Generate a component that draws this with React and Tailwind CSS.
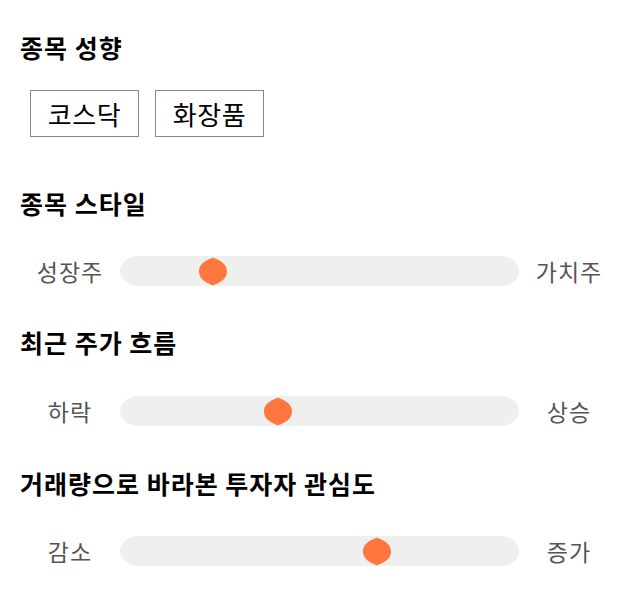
import React from "react";

const font = { fontFamily: '"Noto Sans CJK KR", "Noto Sans", sans-serif' };

function Thumb({ className }) {
  return (
    <svg className={className} width="28" height="29" viewBox="0 0 28 29">
      <path
        d="M14 0.5 C16.5 2 28 5 28 14.5 C28 24 16.5 27 14 28.5 C11.5 27 0 24 0 14.5 C0 5 11.5 2 14 0.5 Z"
        fill="#FF773E"
      />
    </svg>
  );
}

function Slider({ left, right, pos }) {
  return (
    <div className="flex items-center h-[30px]">
      <div className="w-[100px] text-center text-[23px] tracking-[1px] text-[#555555] leading-[30px]">{left}</div>
      <div className="relative w-[399px] h-[30px] bg-[#efefef] rounded-[18px/15px]">
        <Thumb className={`absolute top-[0.5px] ${pos}`} />
      </div>
      <div className="w-[100px] text-center text-[23px] tracking-[1px] text-[#555555] leading-[30px]">{right}</div>
    </div>
  );
}

export default function App() {
  return (
    <div className="w-[640px] h-[606px] bg-white px-5 pt-[32px]" style={font}>
      <h2 className="text-[25px] tracking-[1px] font-bold leading-[30px] text-black">종목 성향</h2>
      <div className="flex gap-4 mt-[28px] ml-[10px]">
        <div className="w-[109px] h-[47px] border border-[#888888] flex items-center justify-center text-[26px] tracking-[0.5px] text-black">코스닥</div>
        <div className="w-[109px] h-[47px] border border-[#888888] flex items-center justify-center text-[26px] tracking-[0.5px] text-black">화장품</div>
      </div>

      <h2 className="mt-[51px] text-[25px] tracking-[1px] font-bold leading-[30px] text-black">종목 스타일</h2>
      <div className="mt-[38px]">
        <Slider left="성장주" right="가치주" pos="left-[79px]" />
      </div>

      <h2 className="mt-[41px] text-[25px] tracking-[1px] font-bold leading-[30px] text-black">최근 주가 흐름</h2>
      <div className="mt-[39px]">
        <Slider left="하락" right="상승" pos="left-[144px]" />
      </div>

      <h2 className="mt-[42px] text-[25px] tracking-[1px] font-bold leading-[30px] text-black">거래량으로 바라본 투자자 관심도</h2>
      <div className="mt-[38px]">
        <Slider left="감소" right="증가" pos="left-[243px]" />
      </div>
    </div>
  );
}
